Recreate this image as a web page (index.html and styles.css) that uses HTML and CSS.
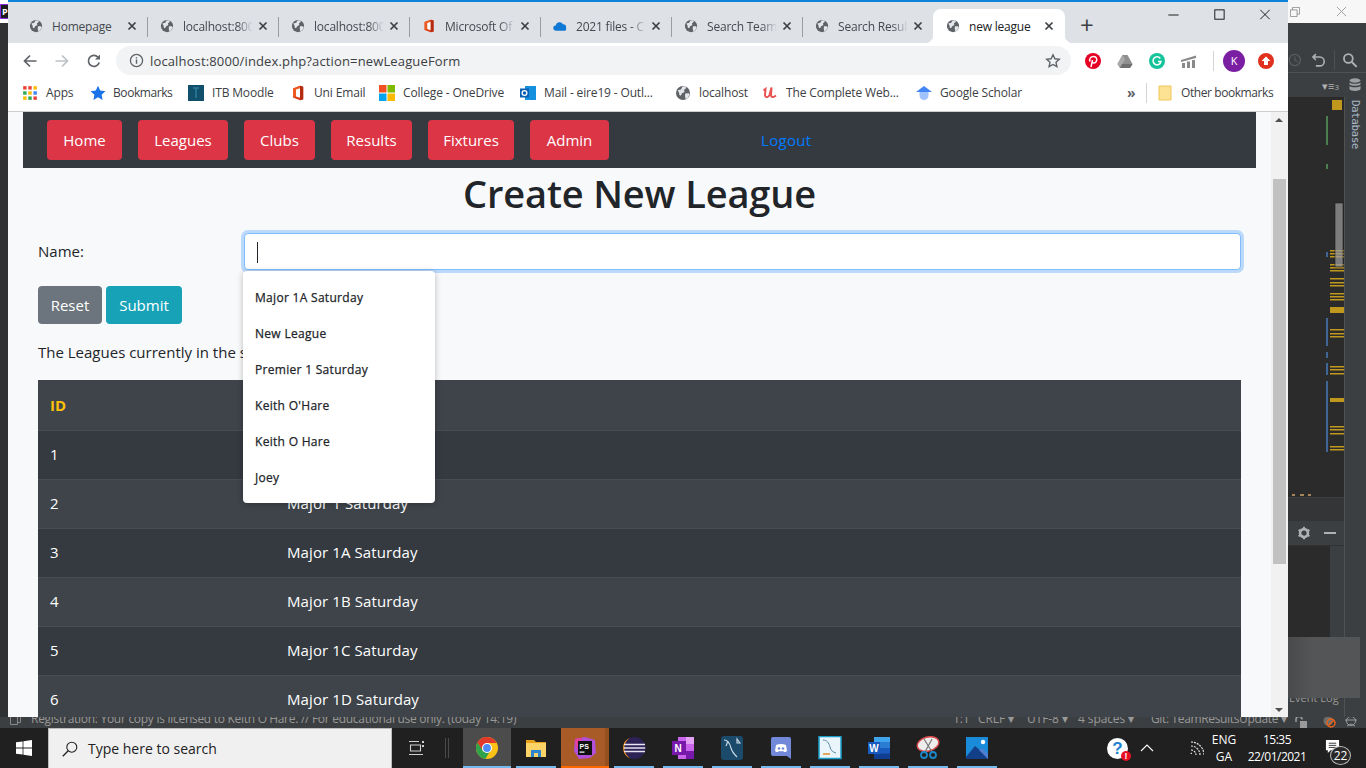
FILE: index.html
```html
<!DOCTYPE html>
<html lang="en">
<head>
<meta charset="utf-8">
<title>new league</title>
<link rel="stylesheet" href="styles.css">
</head>
<body>
<svg class="defs" width="0" height="0" aria-hidden="true">
  <symbol id="globe" viewBox="0 0 16 16"><circle cx="8" cy="8" r="7" fill="#5f6368"/><path d="M2.6 5.2 6 4.4l1.4-2.8 3.2-.3.6 1.8-2.2 2 .6 1.8-2.6 1.4-1.2 2.4-1.4-.6-.4-2.6zM10.2 8.4l3.6-.2.8 1.6-2 3.4-2 .8-.6-3z" fill="#e4e6ea"/></symbol>
  <symbol id="office" viewBox="0 0 16 16"><path d="M10 .8 3 3.400v9.200L10 15.200l3.200-1V1.800z" fill="#dc3e15"/><path d="M3 3.400 10 .8v2.400L6 4.600v6.800l-3 1.200z" fill="#ee5a1f"/><path d="M6 4.600 10 3.200v9.600L6 11.400z" fill="#fff"/><path d="M10 .8l3.200 1v12.400l-3.200 1z" fill="#b32c12"/></symbol>
  <symbol id="chrome" viewBox="0 0 24 24"><circle cx="12" cy="12" r="11" fill="#fbc116"/><path d="M12 1a11 11 0 0 0-9.6 5.600L7 14l5-7h9.600A11 11 0 0 0 12 1z" fill="#e0392b"/><path d="M2.400 6.600A11 11 0 0 0 10.400 22.900L15 15H8z" fill="#2fa24a"/><circle cx="12" cy="12" r="5" fill="#fff"/><circle cx="12" cy="12" r="3.900" fill="#4a8bf5"/></symbol>
  <symbol id="tabx" viewBox="0 0 10 10"><path d="M1.500 1.500l7 7M8.500 1.500l-7 7" stroke="#3c4043" stroke-width="1.700" fill="none"/></symbol>
</svg>

<div class="desktop">
  <div class="main-row">
    <aside class="left-ide">
      <div class="left-ide-top"><span class="ps-mini">P</span></div>
    </aside>

    <section class="browser">
      <div class="tabstrip">
        <div class="tab"><svg class="tab-ico"><use href="#globe"/></svg><span class="tab-text">Homepage</span><svg class="tab-x"><use href="#tabx"/></svg></div>
        <div class="tab"><svg class="tab-ico"><use href="#globe"/></svg><span class="tab-text tab-fade">localhost:800</span><svg class="tab-x"><use href="#tabx"/></svg></div>
        <div class="tab"><svg class="tab-ico"><use href="#globe"/></svg><span class="tab-text tab-fade">localhost:800</span><svg class="tab-x"><use href="#tabx"/></svg></div>
        <div class="tab"><svg class="tab-ico"><use href="#office"/></svg><span class="tab-text tab-fade">Microsoft Of</span><svg class="tab-x"><use href="#tabx"/></svg></div>
        <div class="tab"><svg class="tab-ico" viewBox="0 0 16 16"><path d="M3.500 13.500a3 3 0 0 1-.4-6 4.400 4.400 0 0 1 8.300-1.400 3.600 3.600 0 0 1 3.600 3.700 3.700 3.700 0 0 1-.9 3.700z" fill="#0f78d4"/></svg><span class="tab-text tab-fade">2021 files - C</span><svg class="tab-x"><use href="#tabx"/></svg></div>
        <div class="tab"><svg class="tab-ico"><use href="#globe"/></svg><span class="tab-text tab-fade">Search Team</span><svg class="tab-x"><use href="#tabx"/></svg></div>
        <div class="tab tab-nosep"><svg class="tab-ico"><use href="#globe"/></svg><span class="tab-text tab-fade">Search Resul</span><svg class="tab-x"><use href="#tabx"/></svg></div>
        <div class="tab tab-active"><svg class="tab-ico"><use href="#globe"/></svg><span class="tab-text">new league</span><svg class="tab-x"><use href="#tabx"/></svg></div>
        <span class="new-tab">+</span>
        <div class="win-controls">
          <svg class="win-btn" viewBox="0 0 46 30"><path d="M18 15h11" stroke="#111" fill="none"/></svg>
          <svg class="win-btn" viewBox="0 0 46 30"><rect x="18.500" y="9.500" width="10" height="10" stroke="#111" fill="none"/></svg>
          <svg class="win-btn" viewBox="0 0 46 30"><path d="M18 9.500l10 10M28 9.500l-10 10" stroke="#111" fill="none"/></svg>
        </div>
      </div>

      <div class="toolbar">
        <svg class="nav-ico nav-back" viewBox="0 0 16 16"><path d="M14.500 8H2.500M8 2.500 2.500 8 8 13.500" stroke="#5f6368" stroke-width="1.700" fill="none"/></svg>
        <svg class="nav-ico nav-fwd" viewBox="0 0 16 16"><path d="M1.500 8h12M8 2.500 13.500 8 8 13.500" stroke="#bdc1c6" stroke-width="1.700" fill="none"/></svg>
        <svg class="nav-ico nav-reload" viewBox="0 0 16 16"><path d="M13.200 9.500A5.500 5.500 0 1 1 12 4.200" stroke="#5f6368" stroke-width="1.700" fill="none"/><path d="M14 1.500V6.500H9z" fill="#5f6368"/></svg>
        <div class="omnibox">
          <svg class="info-ico" viewBox="0 0 16 16"><circle cx="8" cy="8" r="6.500" stroke="#5f6368" stroke-width="1.400" fill="none"/><path d="M8 7v4.500M8 4.400v1.400" stroke="#5f6368" stroke-width="1.500"/></svg>
          <span class="url">localhost:8000/index.php?action=newLeagueForm</span>
          <svg class="star-ico" viewBox="0 0 16 16"><path d="m8 1.800 1.900 4 4.400.5-3.300 3 .9 4.400L8 11.500l-3.900 2.200.9-4.400-3.300-3 4.400-.5z" stroke="#5f6368" stroke-width="1.400" fill="none"/></svg>
        </div>
        <div class="extensions">
          <svg class="ext" viewBox="0 0 16 16"><circle cx="8" cy="8" r="8" fill="#e60023"/><path d="M6 14l1.500-7M5 8.500C3.800 5.500 6 3.500 8.300 3.500c2.500 0 3.700 1.600 3.400 3.700-.3 2-1.900 3.300-3.300 2.700-.7-.3-1-.9-1-.9" stroke="#fff" stroke-width="1.500" fill="none"/></svg>
          <svg class="ext" viewBox="0 0 16 16"><path d="M5.500 2h5l5 9-2.500 4H3L.5 11z" fill="#8f8f8f"/><path d="M5.500 2 8 6.500 3 15 .5 11z" fill="#a9a9a9"/><path d="M5 11h10.500L13 15H3z" fill="#6f6f6f"/></svg>
          <svg class="ext" viewBox="0 0 16 16"><circle cx="8" cy="8" r="8" fill="#15c39a"/><path d="M11.300 5.500A4 4 0 1 0 12 8.500H9" stroke="#fff" stroke-width="1.500" fill="none"/></svg>
          <svg class="ext" viewBox="0 0 16 16"><path d="M0 7 15 2.500V5L0 9zM1 10h3v5H1zM6 8.500h3V15H6zM11 7h3v8h-3z" fill="#8a8a8a"/></svg>
          <span class="ext-sep"></span>
          <span class="avatar">K</span>
          <svg class="ext ext-last" viewBox="0 0 16 16"><circle cx="8" cy="8" r="8" fill="#e0301e"/><path d="M8 3.500 12.500 8H10v4H6V8H3.500z" fill="#fff"/></svg>
        </div>
      </div>

      <div class="bookmarks">
        <span class="bm"><svg class="bm-ico" viewBox="0 0 14 14"><g><rect x="1" y="1" width="3" height="3" fill="#ea4335"/><rect x="5.500" y="1" width="3" height="3" fill="#ea4335"/><rect x="10" y="1" width="3" height="3" fill="#fbbc05"/><rect x="1" y="5.500" width="3" height="3" fill="#34a853"/><rect x="5.500" y="5.500" width="3" height="3" fill="#fbbc05"/><rect x="10" y="5.500" width="3" height="3" fill="#4285f4"/><rect x="1" y="10" width="3" height="3" fill="#fbbc05"/><rect x="5.500" y="10" width="3" height="3" fill="#34a853"/><rect x="10" y="10" width="3" height="3" fill="#ea4335"/></g></svg>Apps</span>
        <span class="bm bm-tight bm-star"><svg class="bm-ico" viewBox="0 0 16 16"><path d="m8 .8 2.200 4.800 5.200.6-3.800 3.500 1 5.200L8 12.300 3.400 14.900l1-5.200L.6 6.200l5.200-.6z" fill="#1a73e8"/></svg>Bookmarks</span>
        <span class="bm"><svg class="bm-ico" viewBox="0 0 16 16"><rect width="16" height="16" fill="#11506b"/><path d="M5 3h6M8 3v10" stroke="#2c7d9c" stroke-width="1.500"/></svg>ITB Moodle</span>
        <span class="bm"><svg class="bm-ico"><use href="#office"/></svg>Uni Email</span>
        <span class="bm"><svg class="bm-ico" viewBox="0 0 16 16"><rect width="7.500" height="7.500" fill="#f25022"/><rect x="8.500" width="7.500" height="7.500" fill="#7fba00"/><rect y="8.500" width="7.500" height="7.500" fill="#00a4ef"/><rect x="8.500" y="8.500" width="7.500" height="7.500" fill="#ffb900"/></svg>College - OneDrive</span>
        <span class="bm"><svg class="bm-ico" viewBox="0 0 16 16"><rect x="5" y="1" width="11" height="14" fill="#1490df"/><rect x="0" y="3.500" width="9" height="9" fill="#0a5fb4"/><circle cx="4.500" cy="8" r="2.400" stroke="#fff" stroke-width="1.300" fill="none"/></svg>Mail - eire19 - Outl...</span>
        <span class="bm"><svg class="bm-ico"><use href="#globe"/></svg>localhost</span>
        <span class="bm"><svg class="bm-ico" viewBox="0 0 16 16"><path d="M1.500 5.500 3.500 4 3 10c0 3 3.500 2.800 4.500 0L9.500 2.500 9 10c0 2 2 3 5 .5" stroke="#ea5252" stroke-width="2" fill="none"/></svg>The Complete Web...</span>
        <span class="bm"><svg class="bm-ico" viewBox="0 0 16 16"><path d="M8 1 16 7H0z" fill="#4285f4"/><path d="M3.500 7h9v3.500a4.500 4.500 0 0 1-9 0z" fill="#a0c3ff"/></svg>Google Scholar</span>
        <span class="bm-more">»</span>
        <span class="bm-sep"></span>
        <span class="bm bm-tight"><svg class="bm-ico" viewBox="0 0 16 16"><path d="M2 1h9l3 0v14H2z" fill="#fde293" stroke="#f0c65a"/></svg>Other bookmarks</span>
      </div>

      <div class="viewport">
        <main class="page">
          <nav class="site-nav">
            <div class="nav-buttons">
              <a class="nav-btn">Home</a>
              <a class="nav-btn">Leagues</a>
              <a class="nav-btn">Clubs</a>
              <a class="nav-btn">Results</a>
              <a class="nav-btn">Fixtures</a>
              <a class="nav-btn">Admin</a>
            </div>
            <a class="logout">Logout</a>
          </nav>
          <div class="content">
            <h1>Create New League</h1>
            <div class="name-row">
              <label class="name-label">Name:</label>
              <div class="name-field">
                <div class="name-input"><span class="caret"></span></div>
                <ul class="suggest">
                  <li>Major 1A Saturday</li>
                  <li>New League</li>
                  <li>Premier 1 Saturday</li>
                  <li>Keith O'Hare</li>
                  <li>Keith O Hare</li>
                  <li>Joey</li>
                </ul>
              </div>
            </div>
            <div class="actions">
              <button class="btn btn-reset">Reset</button>
              <button class="btn btn-submit">Submit</button>
            </div>
            <p class="intro">The Leagues currently in the system are:</p>
            <table class="leagues">
              <thead><tr><th class="col-id">ID</th><th></th></tr></thead>
              <tbody>
                <tr><td>1</td><td></td></tr>
                <tr><td>2</td><td>Major 1 Saturday</td></tr>
                <tr><td>3</td><td>Major 1A Saturday</td></tr>
                <tr><td>4</td><td>Major 1B Saturday</td></tr>
                <tr><td>5</td><td>Major 1C Saturday</td></tr>
                <tr><td>6</td><td>Major 1D Saturday</td></tr>
              </tbody>
            </table>
          </div>
        </main>
        <div class="scrollbar">
          <span class="sb-arrow sb-up"></span>
          <span class="sb-thumb"></span>
          <span class="sb-arrow sb-down"></span>
        </div>
      </div>
    </section>

    <aside class="right-ide">
      <div class="ide-title">
        <svg class="ide-restore" viewBox="0 0 12 12"><path d="M.5 3.500h8v8h-8zM3 3.500V.500h8.500v8H8.500" stroke="#888" fill="none"/></svg>
        <svg class="ide-close" viewBox="0 0 12 12"><path d="M1 1l10 10M11 1 1 11" stroke="#999" fill="none"/></svg>
      </div>
      <div class="ide-toolbar">
        <svg class="ide-clock" viewBox="0 0 16 16"><circle cx="8" cy="8" r="6.500" stroke="#5a5c5e" stroke-width="1.500" fill="none"/><path d="M8 4v4l3 2" stroke="#5a5c5e" stroke-width="1.300" fill="none"/></svg>
        <svg class="ide-tool" viewBox="0 0 16 16"><path d="M5 2 2 5l3 3M2 5h7a4 4 0 0 1 0 9H5" stroke="#afb1b3" stroke-width="1.600" fill="none"/></svg>
        <span class="ide-tool-sep"></span>
        <svg class="ide-tool" viewBox="0 0 16 16"><circle cx="6.500" cy="6.500" r="4.500" stroke="#afb1b3" stroke-width="1.800" fill="none"/><path d="m10 10 5 5" stroke="#afb1b3" stroke-width="2"/></svg>
      </div>
      <div class="ide-tabs">
        <span class="ide-sort">▾≡<small>3</small></span>
        <svg class="ide-db" viewBox="0 0 12 14"><g fill="#9da0a2"><ellipse cx="6" cy="2.500" rx="5.500" ry="2.200"/><path d="M.5 4.500c1.500 1.800 9.500 1.800 11 0v2c-1.500 1.800-9.500 1.800-11 0zM.5 8c1.500 1.800 9.500 1.800 11 0v3.200c-1.500 2.300-9.500 2.300-11 0z"/></g></svg>
      </div>
      <div class="ide-body">
        <div class="ide-left">
          <svg class="minimap" viewBox="0 0 56 400">
            <rect x="44" y="3" width="10" height="10" fill="#c1981e"/>
            <g fill="#4a7f50"><rect x="38" y="19" width="2" height="29"/><rect x="38" y="67" width="2" height="5"/></g>
            <g fill="#3f6796"><rect x="38" y="155" width="2" height="5"/><rect x="38" y="221" width="2" height="28"/><rect x="38" y="255" width="2" height="6"/><rect x="38" y="266" width="2" height="12"/><rect x="38" y="284" width="2" height="71"/></g>
            <g fill="#c1981e"><rect x="42" y="153" width="14" height="1.500"/><rect x="42" y="156" width="14" height="1.500"/><rect x="42" y="159" width="14" height="1.500"/><rect x="42" y="167" width="14" height="1.500"/><rect x="42" y="170" width="14" height="1.500"/><rect x="42" y="173" width="14" height="1.500"/><rect x="42" y="181" width="14" height="1.500"/><rect x="42" y="185" width="14" height="1.500"/><rect x="42" y="188" width="14" height="1.500"/><rect x="42" y="196" width="14" height="1.500"/><rect x="42" y="199" width="14" height="1.500"/><rect x="42" y="202" width="14" height="1.500"/><rect x="42" y="210" width="14" height="6"/><rect x="42" y="232" width="14" height="1.500"/><rect x="42" y="236" width="14" height="1.500"/><rect x="42" y="239" width="14" height="1.500"/><rect x="42" y="269" width="14" height="1.500"/><rect x="42" y="272" width="14" height="1.500"/><rect x="42" y="276" width="14" height="1.500"/><rect x="42" y="301" width="14" height="4"/><rect x="42" y="329" width="14" height="1.500"/><rect x="42" y="332" width="14" height="1.500"/><rect x="42" y="336" width="14" height="1.500"/><rect x="42" y="349" width="14" height="1.500"/><rect x="42" y="352" width="14" height="1.500"/></g>
            <rect x="47" y="106" width="8" height="64" fill="#9a9a9a" fill-opacity=".75" stroke="#1d1d1d" stroke-width=".6"/>
            <g fill="#a5855a"><rect x="4" y="397" width="3" height="2"/><rect x="12" y="397" width="4" height="2"/><rect x="20" y="397" width="3" height="2"/></g>
          </svg>
          <div class="ide-panel-top"></div>
          <div class="ide-panel-bar">
            <svg class="ide-gear" viewBox="0 0 16 16"><path d="M8 3.500a4.500 4.500 0 1 1 0 9 4.500 4.500 0 0 1 0-9z" stroke="#afb1b3" stroke-width="3" fill="none"/><path d="M8 .8v2.700M8 12.500v2.700M1.800 4.400l2.300 1.300M11.900 10.300l2.300 1.300M14.200 4.400l-2.300 1.300M4.100 10.300l-2.300 1.300" stroke="#afb1b3" stroke-width="2.200"/></svg>
            <span class="ide-dash"></span>
          </div>
          <div class="ide-lower"><span class="ide-lower-side"></span></div>
          <div class="ide-eventlog">Event Log</div>
        </div>
        <div class="db-strip"><span class="db-text">Database</span></div>
        <div class="ide-popup"></div>
      </div>
    </aside>
  </div>

  <footer class="ide-status">
    <svg class="status-box" viewBox="0 0 11 11"><path d="M.5 2.500h7v8h-7zM3 2.500V.5h7.500v8H7.500" stroke="#888" fill="none"/></svg>
    <span class="status-left">Registration: Your copy is licensed to Keith O'Hare. // For educational use only. (today 14:19)</span>
    <div class="status-right"><span>1:1</span><span>CRLF ▾</span><span>UTF-8 ▾</span><span>4 spaces ▾</span><span class="status-git">Git: TeamResultsUpdate ▾</span></div>
    <svg class="status-icons" viewBox="0 0 72 11"><path d="M2 5V2.500a3 3 0 0 1 6 0H8" stroke="#9a9a9a" stroke-width="1.500" fill="none"/><rect x="6" y="4" width="7" height="7" fill="#9a9a9a"/><circle cx="34" cy="4" r="4.500" fill="#6e6e6e"/><circle cx="37" cy="6" r="4" stroke="#e8641b" stroke-width="1.500" fill="none"/><path d="m34 9 6-6" stroke="#e8641b" stroke-width="1.500"/><circle cx="57" cy="4" r="4.500" stroke="#9a9a9a" fill="none"/><path d="M51 3h12M53 9l4-2 4 2" stroke="#9a9a9a" fill="none"/></svg>
  </footer>

  <footer class="taskbar">
    <svg class="start" viewBox="0 0 16 16"><path d="M0 2.300 6.600 1.400v6.200H0zM7.400 1.300 16 0v7.600H7.400zM0 8.400h6.600v6.200L0 13.700zM7.400 8.400H16V16l-8.600-1.300z" fill="#fff"/></svg>
    <div class="search">
      <svg class="search-ico" viewBox="0 0 16 16"><circle cx="9.800" cy="6.200" r="5" stroke="#222" stroke-width="1.100" fill="none"/><path d="M6.200 9.800.8 15.200" stroke="#222" stroke-width="1.300"/></svg>
      <span>Type here to search</span>
    </div>
    <svg class="taskview" viewBox="0 0 16 16"><path d="M1 1.500h10M1 14.500h14M2.500 5h10v6h-10z" stroke="#d0d0d0" stroke-width="1.100" fill="none"/><path d="M14 1h2v2h-2zM14 5h2v2h-2z" fill="#d0d0d0"/></svg>
    <span class="grip"></span>
    <div class="apps">
      <div class="app app-hover"><svg class="app-ico"><use href="#chrome"/></svg></div>
      <div class="app"><svg class="app-ico" viewBox="0 0 24 24"><path d="M2 4h8l2 2h10v4H2z" fill="#e5a21a"/><path d="M2 7h20v14H2z" fill="#fcd367"/><path d="M7 14h10v7h-3v-4h-4v4H7z" fill="#2b86cf"/></svg></div>
      <div class="app app-ps"><svg class="app-ico" viewBox="0 0 24 24"><path d="M2 3l10-2 10 3 1 13-6 5-11 1-5-8z" fill="#b04fd8"/><path d="M2 3l7-1-2 9-4 2z" fill="#e23fa0"/><rect x="5" y="5" width="14" height="14" fill="#111"/><text x="6.500" y="12.500" class="ps-text">PS</text><rect x="6.500" y="15.500" width="5" height="1.200" fill="#fff"/></svg></div>
      <div class="app"><svg class="app-ico" viewBox="0 0 24 24"><circle cx="12.500" cy="12" r="11" fill="#2c2255"/><path d="M8 1.800a11 11 0 0 0 0 20.400A12 12 0 0 1 8 1.800z" fill="#f7941e"/><path d="M2 8.500h21M1.800 12h21.400M2 15.500h21" stroke="#e8e4f2" stroke-width="1.500"/></svg></div>
      <div class="app"><svg class="app-ico" viewBox="0 0 24 24"><rect x="7" y="1" width="16" height="22" fill="#ca64ea"/><path d="M15 1h8v7h-8z" fill="#e3a1f5"/><path d="M15 15h8v8h-8z" fill="#7719aa"/><rect x="1" y="5" width="14" height="14" fill="#7719aa"/><text x="3.500" y="16.200" class="one-text">N</text></svg></div>
      <div class="app"><svg class="app-ico" viewBox="0 0 24 24"><rect x="1" y="0" width="22" height="24" rx="3" fill="#1b4a6b"/><path d="M4 4c4 0 6 4 7 8s3 6 6 9M8 5l-2 5M17 3l3 4-3 0z" stroke="#cfdfea" stroke-width="1.100" fill="none"/></svg></div>
      <div class="app"><svg class="app-ico" viewBox="0 0 24 24"><path d="M4 1h16a2 2 0 0 1 2 2v20l-4-3H4a2 2 0 0 1-2-2V3a2 2 0 0 1 2-2z" fill="#7289da"/><path d="M7 9c3-1.500 7-1.500 10 0l1 6c-1 1-2 1-3 1l-1-1c-1 .3-3 .3-4 0l-1 1c-1 0-2 0-3-1z" fill="#fff"/><circle cx="10" cy="12.500" r="1.300" fill="#7289da"/><circle cx="14" cy="12.500" r="1.300" fill="#7289da"/></svg></div>
      <div class="app"><svg class="app-ico" viewBox="0 0 24 24"><rect x="1" y="0.500" width="22" height="22" fill="#e9f5fb" stroke="#1b9dc9" stroke-width="1.500"/><path d="M5 4c4 0 6 3 7 7s3 5 6 6" stroke="#5a8aa5" fill="none"/><path d="M5 18h7" stroke="#e08b2c" stroke-width="1.500"/></svg></div>
      <div class="app"><svg class="app-ico" viewBox="0 0 24 24"><rect x="7" y="1" width="16" height="22" rx="1" fill="#185abd"/><path d="M7 1h16v5.500H7z" fill="#41a5ee"/><path d="M7 6.500h16V12H7z" fill="#2b7cd3"/><path d="M7 17.500h16V23H7z" fill="#103f91"/><rect x="1" y="6" width="12" height="12" fill="#185abd"/><text x="2.300" y="15.700" class="one-text">W</text></svg></div>
      <div class="app"><svg class="app-ico" viewBox="0 0 24 24"><ellipse cx="12" cy="8" rx="11" ry="7" transform="rotate(-15 12 8)" fill="#ededed" stroke="#d54a4a" stroke-width="1.500"/><path d="M8 3l8 13M16 3 9 16" stroke="#777" stroke-width="1.200"/><circle cx="8" cy="19" r="3" stroke="#1b87c9" stroke-width="1.800" fill="none"/><circle cx="17" cy="19" r="3" stroke="#1b87c9" stroke-width="1.800" fill="none"/></svg></div>
      <div class="app"><svg class="app-ico" viewBox="0 0 24 24"><rect x="1" y="1" width="22" height="22" fill="#1a8bd8"/><path d="M1 21 10 10l13 11v2H1z" fill="#123f88"/><path d="M14 14l3-2 6 6v5z" fill="#4f7fd0"/><circle cx="18" cy="6" r="2.200" fill="#fff"/></svg></div>
    </div>
    <div class="tray">
      <span class="tray-help">?<i class="tray-alert">!</i></span>
      <svg class="tray-chev" viewBox="0 0 14 8"><path d="M1 7l6-6 6 6" stroke="#fff" stroke-width="1.100" fill="none"/></svg>
      <svg class="tray-wifi" viewBox="0 0 16 16"><path d="M3 14a1 1 0 0 1 1-1M3 10a5 5 0 0 1 5 5M3 6a9 9 0 0 1 9 9M3 2a13 13 0 0 1 13 13" stroke="#e4e4e4" stroke-width="1.200" fill="none" stroke-dasharray="2 1"/></svg>
      <div class="tray-lang"><span>ENG</span><span>GA</span></div>
      <div class="tray-clock"><span>15:35</span><span>22/01/2021</span></div>
      <div class="tray-notify">
        <svg class="tray-msg" viewBox="0 0 16 16"><path d="M1 1h14v11H6l-3 3v-3H1z" fill="#fff"/><path d="M4 4.500h8M4 6.800h8M4 9h8" stroke="#333"/></svg>
        <span class="tray-badge">22</span>
      </div>
    </div>
  </footer>
</div>
</body>
</html>
```

FILE: styles.css
```css
* { box-sizing: border-box; }
html, body { margin: 0; padding: 0; height: 768px; overflow: hidden; background: #202020; }
body { font-family: "Open Sans", "Noto Sans", sans-serif; color: #212529; }
.defs { position: absolute; }
svg { display: block; }

.desktop { width: 1366px; height: 768px; display: flex; flex-direction: column; }
.main-row { height: 717px; display: flex; flex: none; }

/* left sliver of the IDE window */
.left-ide { width: 8px; flex: none; background: #2f3133; }
.left-ide-top { height: 23px; background: #fff; padding-top: 4px; overflow: hidden; }
.ps-mini { display: block; width: 12px; height: 15px; background: #1c1c1c; border: 1px solid #8a2be2; color: #fff; font-size: 9px; font-weight: 700; line-height: 13px; padding-left: 1px; }

/* browser window */
.browser { width: 1280px; flex: none; display: flex; flex-direction: column; background: #fff; border-top: 2px solid #0d84d8; }

.tabstrip { height: 41px; background: #dee1e6; display: flex; align-items: flex-end; padding-left: 8px; flex: none; position: relative; }
.tab { width: 131px; height: 34px; flex: none; display: flex; align-items: center; padding-left: 13px; font-size: 12px; color: #45494e; position: relative; }
.tab::after { content: ""; position: absolute; right: -1px; top: 8px; width: 1px; height: 20px; background: #9a9da1; }
.tab-nosep::after { display: none; }
.tab-ico { width: 14px; height: 14px; flex: none; }
.tab-text { width: 70px; margin-left: 9px; white-space: nowrap; overflow: hidden; letter-spacing: -.2px; flex: none; }
.tab-fade { -webkit-mask-image: linear-gradient(to right, #000 78%, transparent 100%); mask-image: linear-gradient(to right, #000 78%, transparent 100%); }
.tab-x { margin-left: 5px; width: 10px; height: 10px; flex: none; }
.tab-active { background: #fff; color: #202124; border-radius: 8px 8px 0 0; width: 132px; }
.tab-active::before, .tab-active::after { content: ""; position: absolute; bottom: 0; top: auto; width: 8px; height: 8px; }
.tab-active::before { left: -8px; right: auto; background: radial-gradient(circle at 0 0, transparent 8px, #fff 8.500px); }
.tab-active::after { right: -8px; background: radial-gradient(circle at 100% 0, transparent 8px, #fff 8.500px); }
.new-tab { margin-left: 15px; font-size: 24px; line-height: 32px; height: 34px; width: 16px; color: #3c4043; flex: none; }
.win-controls { position: absolute; right: 0; top: -1px; display: flex; }
.win-btn { width: 46px; height: 28px; }

.toolbar { height: 35px; flex: none; display: flex; align-items: center; padding-left: 14px; background: #fff; }
.nav-ico { width: 16px; height: 16px; flex: none; margin-right: 16px; }
.omnibox { margin-left: -2px; width: 955px; height: 29px; border-radius: 15px; background: #f1f3f4; display: flex; align-items: center; padding-left: 13px; padding-right: 10px; flex: none; }
.info-ico { width: 15px; height: 15px; flex: none; }
.url { margin-left: 6px; font-size: 13px; letter-spacing: .14px; color: #3c4043; flex: 1; white-space: nowrap; }
.star-ico { width: 16px; height: 16px; flex: none; }
.extensions { display: flex; align-items: center; margin-left: 14px; }
.ext { width: 16px; height: 16px; margin-right: 16px; flex: none; }
.ext-sep { width: 1px; height: 20px; background: #d3d5d8; margin: 0 9px 0 0; }
.avatar { width: 22px; height: 22px; border-radius: 50%; background: #7b1fa2; color: #fff; font-size: 11px; line-height: 22px; text-align: center; margin-right: 13px; flex: none; }
.ext-last { margin-right: 0; }

.bookmarks { height: 34px; flex: none; border-bottom: 1px solid #ccc; display: grid; grid-template-columns: 68px 98px 102px 89px 141px 155px 87px 154px 211px 19px 11px auto; padding: 0 0 4px 14px; align-items: center; font-size: 12px; color: #3c4043; background: #fff; }
.bm { display: flex; align-items: center; white-space: nowrap; letter-spacing: -.15px; }
.bm-tight { letter-spacing: -.42px; }
.bm-star .bm-ico { margin-right: 7px; }
.bm-ico { width: 16px; height: 16px; margin-right: 8px; flex: none; }
.bm-more { font-size: 14px; line-height: 16px; color: #5f6368; font-weight: 700; }
.bm-sep { width: 1px; height: 20px; background: #d3d5d8; }

/* page viewport */
.viewport { flex: 1; display: flex; min-height: 0; }
.page { flex: 1; background: #f8f9fa; overflow: hidden; position: relative; min-width: 0; }
.site-nav { margin: 0 15px; height: 56px; background: #343a40; display: flex; align-items: center; padding-left: 24px; }
.nav-buttons { display: grid; grid-template-columns: 75px 90px 71px 81px 86px 79px; column-gap: 16px; }
.nav-btn { height: 40px; line-height: 40px; text-align: center; background: #dc3545; color: #fff; border-radius: 4px; font-size: 15px; }
.logout { margin-left: 152px; color: #007bff; font-size: 15px; letter-spacing: .3px; }
.content { padding: 0 30px; }
h1 { margin: 1px 0 0; height: 48px; line-height: 48px; text-align: center; font-size: 38px; font-weight: 600; letter-spacing: -.15px; color: #212529; white-space: nowrap; }
.name-row { margin-top: 16px; display: flex; align-items: center; height: 37px; }
.name-label { width: 206px; flex: none; font-size: 15px; margin-top: -2px; }
.name-field { flex: 1; position: relative; height: 37px; }
.name-input { height: 37px; background: #fff; border: 1px solid #80bdff; border-radius: 4px; box-shadow: 0 0 0 3px rgba(0, 123, 255, .25); padding: 8px 12px; }
.caret { display: block; width: 1px; height: 21px; background: #212529; }
.suggest { position: absolute; left: -1px; top: 38px; width: 192px; margin: 0; padding: 8px 0; list-style: none; background: #fff; border-radius: 4px; box-shadow: 0 1px 6px rgba(0, 0, 0, .25); z-index: 2; }
.suggest li { height: 36px; line-height: 37px; padding-left: 12px; font-size: 12px; font-weight: 500; letter-spacing: .3px; -webkit-text-stroke: .25px #212529; color: #212529; }
.actions { margin-top: 16px; display: flex; gap: 4px; }
.btn { height: 38px; border: 0; border-radius: 4px; color: #fff; font: 400 15px "Open Sans", sans-serif; padding: 0; }
.btn-reset { width: 64px; background: #6c757d; }
.btn-submit { width: 76px; background: #17a2b8; }
.intro { margin: 16px 0; height: 24px; line-height: 24px; font-size: 15px; white-space: nowrap; }

.leagues { width: 1203px; border-collapse: collapse; color: #fff; font-size: 15px; letter-spacing: .1px; }
.leagues th { height: 50px; text-align: left; padding: 0 12px; background: #3e444a; font-weight: 700; color: #ffc107; }
.leagues .col-id { width: 237px; }
.leagues td { height: 49px; padding: 0 12px 2px; border-top: 1px solid #454d55; background: #343a40; }
.leagues tbody tr:nth-child(even) td { background: #3e444a; }

.scrollbar { width: 17px; flex: none; background: #f1f1f1; position: relative; display: flex; flex-direction: column; align-items: center; padding-top: 67px; }
.sb-thumb { width: 13px; height: 385px; background: #c1c1c1; }
.sb-arrow { position: absolute; left: 4px; width: 0; height: 0; border-left: 4px solid transparent; border-right: 4px solid transparent; }
.sb-up { top: 6px; border-bottom: 4px solid #505050; }
.sb-down { bottom: 5px; border-top: 4px solid #505050; }

/* right part of the IDE window */
.right-ide { flex: 1; background: #2b2b2b; display: flex; flex-direction: column; min-width: 0; }
.ide-title { height: 23px; flex: none; background: #f7f7f7; display: flex; align-items: center; padding-left: 2px; }
.ide-restore { width: 10px; height: 10px; }
.ide-close { width: 11px; height: 11px; margin-left: 36px; }
.ide-toolbar { height: 50px; flex: none; background: #3c3f41; border-bottom: 1px solid #515151; display: flex; align-items: center; justify-content: flex-end; padding: 24px 8px 0 0; }
.ide-clock { width: 14px; height: 14px; margin-right: 9px; }
.ide-tool { width: 16px; height: 16px; }
.ide-tool-sep { width: 1px; height: 20px; background: #515151; margin: 0 7px 0 8px; }
.ide-tabs { height: 24px; flex: none; background: #3c3f41; display: flex; align-items: center; justify-content: flex-end; padding-right: 5px; font-size: 11px; color: #afb1b3; }
.ide-sort small { font-size: 8px; }
.ide-db { width: 12px; height: 14px; margin-left: 10px; }
.ide-body { flex: 1; display: flex; position: relative; min-height: 0; }
.ide-left { width: 56px; flex: none; display: flex; flex-direction: column; }
.minimap { width: 56px; height: 400px; flex: none; background: #2b2b2b; }
.ide-panel-top { height: 24px; flex: none; background: #333537; border-top: 1px solid #3c3f41; }
.ide-panel-bar { height: 25px; flex: none; background: #3c3f41; border-bottom: 1px solid #323232; display: flex; align-items: center; padding-left: 9px; gap: 13px; }
.ide-gear { width: 14px; height: 14px; }
.ide-dash { width: 12px; height: 2px; background: #afb1b3; }
.ide-lower { height: 152px; flex: none; background: #2b2b2b; display: flex; justify-content: flex-end; }
.ide-lower-side { width: 14px; background: #3c3f41; }
.ide-eventlog { flex: 1; background: #3c3f41; overflow: hidden; font-size: 11px; color: #999; line-height: 0; padding-left: 1px; white-space: nowrap; }
.db-strip { flex: 1; background: #3c3f41; border-left: 1px solid #515151; padding-top: 3px; }
.db-text { display: block; writing-mode: vertical-rl; font: 11px "DejaVu Sans Mono", monospace; letter-spacing: -.5px; color: #a9b7c6; margin-left: 4px; }
.ide-popup { position: absolute; left: 0; top: 540px; width: 72px; height: 61px; background: linear-gradient(to right, #484a4c, #535557 35%); }

/* status line under the windows */
.ide-status { height: 11px; flex: none; background: #3c3f41; overflow: hidden; color: #999; font-size: 12px; line-height: 4px; position: relative; display: flex; }
.status-box { width: 11px; height: 11px; margin: -3px 0 0 10px; flex: none; }
.status-left { margin-left: 10px; white-space: nowrap; flex: none; letter-spacing: -.28px; }
.status-right { position: absolute; left: 953px; top: 0; display: grid; grid-template-columns: 25px 49px 51px 73px auto; white-space: nowrap; letter-spacing: -.1px; }
.status-git { letter-spacing: -.35px; }
.status-icons { position: absolute; left: 1294px; top: 0; width: 72px; height: 11px; }

/* taskbar */
.taskbar { height: 40px; flex: none; background: #202020; display: flex; align-items: center; }
.start { width: 16px; height: 16px; margin-left: 16px; flex: none; }
.search { margin-left: 16px; width: 344px; height: 40px; background: #f0f0f0; border: 1px solid #bcbcbc; border-bottom: 0; display: flex; align-items: center; padding-left: 13px; font-size: 14px; color: #222; flex: none; }
.search-ico { width: 16px; height: 16px; margin-right: 10px; flex: none; }
.taskview { width: 16px; height: 16px; margin-left: 16px; flex: none; }
.grip { width: 4px; height: 20px; margin-left: 21px; border-left: 1px solid #4a4a4a; border-right: 1px solid #4a4a4a; flex: none; }
.apps { display: flex; gap: 1px; margin-left: 14px; height: 40px; flex: none; }
.app { width: 48px; height: 40px; display: flex; align-items: center; justify-content: center; position: relative; }
.app::after { content: ""; position: absolute; left: 4px; right: 4px; bottom: 0; height: 2px; background: #76b9ed; }
.app-hover { background: #4c4c4c; }
.app-hover::after { left: 0; right: 0; }
.app-ps { background: #a95b27; box-shadow: inset -4px 0 #96501f; }
.app-ps::after { left: 0; right: 0; background: #ff6a00; }
.app-ico { width: 24px; height: 24px; }
.ps-text { font: 700 7px "Liberation Sans", sans-serif; fill: #fff; }
.one-text { font: 700 10px "Liberation Sans", sans-serif; fill: #fff; }

.tray { display: flex; align-items: center; color: #fff; font-size: 12px; flex: none; margin-left: 106px; height: 40px; }
.tray-help { width: 21px; height: 21px; border-radius: 50%; background: #fff; color: #1f7fd0; font: 700 17px/21px "Liberation Sans", sans-serif; text-align: center; position: relative; flex: none; }
.tray-alert { position: absolute; right: -3px; bottom: -2px; width: 10px; height: 10px; border-radius: 50%; background: #e81123; color: #fff; font: 700 9px/10px "Liberation Sans", sans-serif; }
.tray-chev { width: 14px; height: 8px; margin-left: 12px; flex: none; }
.tray-wifi { width: 16px; height: 16px; margin-left: 34px; flex: none; }
.tray-lang { width: 34px; margin-left: 3px; display: flex; flex-direction: column; align-items: center; line-height: 17px; flex: none; }
.tray-clock { width: 72px; display: flex; flex-direction: column; align-items: center; line-height: 17px; flex: none; letter-spacing: -.5px; }
.tray-notify { width: 30px; height: 30px; margin-left: 12px; position: relative; flex: none; }
.tray-msg { width: 15px; height: 15px; position: absolute; left: 0; top: 6px; }
.tray-badge { position: absolute; left: 5px; top: 13px; width: 21px; height: 19px; border-radius: 50%; border: 1px solid #bbb; background: #2a2a2a; font-size: 12px; line-height: 17px; text-align: center; }
```
